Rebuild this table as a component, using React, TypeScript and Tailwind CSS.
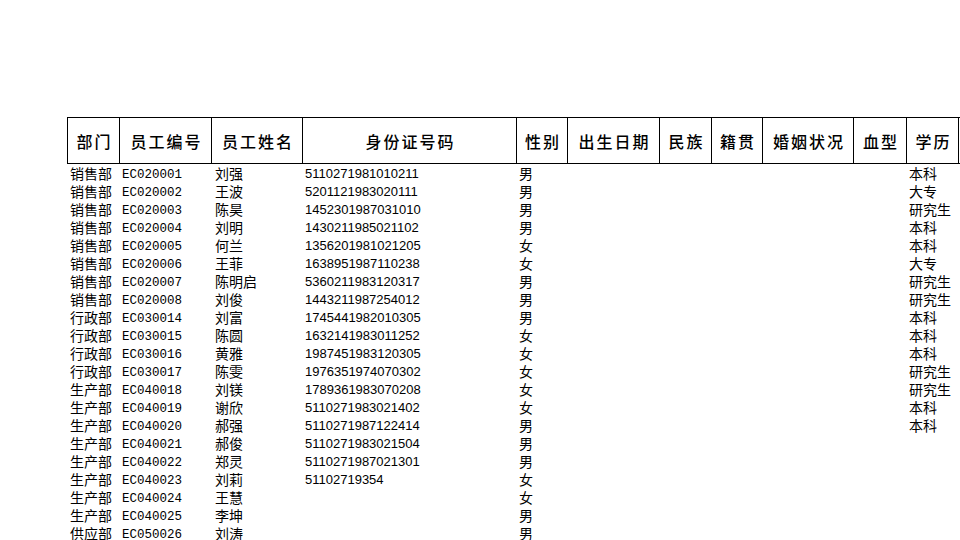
import React from 'react';

// 表头列宽 (px)
const columns: { title: string; width: number }[] = [
  { title: '部门', width: 52 },
  { title: '员工编号', width: 92 },
  { title: '员工姓名', width: 91 },
  { title: '身份证号码', width: 214 },
  { title: '性别', width: 51 },
  { title: '出生日期', width: 92 },
  { title: '民族', width: 52 },
  { title: '籍贯', width: 51 },
  { title: '婚姻状况', width: 91 },
  { title: '血型', width: 53 },
  { title: '学历', width: 52 },
  { title: '', width: 80 },
];

const rows: [string, string, string, string, string, string][] = [
  ['销售部', 'EC020001', '刘强', '5110271981010211', '男', '本科'],
  ['销售部', 'EC020002', '王波', '5201121983020111', '男', '大专'],
  ['销售部', 'EC020003', '陈昊', '1452301987031010', '男', '研究生'],
  ['销售部', 'EC020004', '刘明', '1430211985021102', '男', '本科'],
  ['销售部', 'EC020005', '何兰', '1356201981021205', '女', '本科'],
  ['销售部', 'EC020006', '王菲', '1638951987110238', '女', '大专'],
  ['销售部', 'EC020007', '陈明启', '5360211983120317', '男', '研究生'],
  ['销售部', 'EC020008', '刘俊', '1443211987254012', '男', '研究生'],
  ['行政部', 'EC030014', '刘富', '1745441982010305', '男', '本科'],
  ['行政部', 'EC030015', '陈圆', '1632141983011252', '女', '本科'],
  ['行政部', 'EC030016', '黄雅', '1987451983120305', '女', '本科'],
  ['行政部', 'EC030017', '陈雯', '1976351974070302', '女', '研究生'],
  ['生产部', 'EC040018', '刘镁', '1789361983070208', '女', '研究生'],
  ['生产部', 'EC040019', '谢欣', '5110271983021402', '女', '本科'],
  ['生产部', 'EC040020', '郝强', '5110271987122414', '男', '本科'],
  ['生产部', 'EC040021', '郝俊', '5110271983021504', '男', ''],
  ['生产部', 'EC040022', '郑灵', '5110271987021301', '男', ''],
  ['生产部', 'EC040023', '刘莉', '51102719354', '女', ''],
  ['生产部', 'EC040024', '王慧', '', '女', ''],
  ['生产部', 'EC040025', '李坤', '', '男', ''],
  ['供应部', 'EC050026', '刘涛', '', '男', ''],
];

const cjk = "font-['SimSun','Noto_Sans_CJK_SC',sans-serif]";

export default function App() {
  return (
    <div className="w-[960px] h-[540px] overflow-hidden bg-white text-black pt-[117px] pl-[67px]">
      {/* 表头 */}
      <div className="flex w-max h-[47px] border-t border-b border-l border-black">
        {columns.map((col, i) => (
          <div
            key={i}
            className={`shrink-0 h-full border-r border-black flex items-center justify-center pl-[2px] text-[16px] font-medium tracking-[2px] ${cjk}`}
            style={{ width: col.width }}
          >
            {col.title}
          </div>
        ))}
      </div>

      {/* データ行 */}
      <div className="flex flex-col w-max">
        {rows.map((r, i) => (
          <div key={i} className="flex h-[18px] leading-[18px] whitespace-nowrap">
            <div className={`shrink-0 w-[53px] pl-[3px] text-[14px] ${cjk}`}>{r[0]}</div>
            <div className="shrink-0 w-[92px] pl-[2px] pt-[2px] text-[12.5px] font-['Liberation_Mono',monospace]">{r[1]}</div>
            <div className={`shrink-0 w-[91px] pl-[3px] text-[14px] ${cjk}`}>{r[2]}</div>
            <div className="shrink-0 w-[214px] pl-[2px] pt-[1px] text-[13px] font-['Liberation_Sans',sans-serif]">{r[3]}</div>
            <div className={`shrink-0 w-[390px] pl-[2px] text-[14px] ${cjk}`}>{r[4]}</div>
            <div className={`shrink-0 w-[60px] pl-[2px] text-[14px] ${cjk}`}>{r[5]}</div>
          </div>
        ))}
      </div>
    </div>
  );
}
